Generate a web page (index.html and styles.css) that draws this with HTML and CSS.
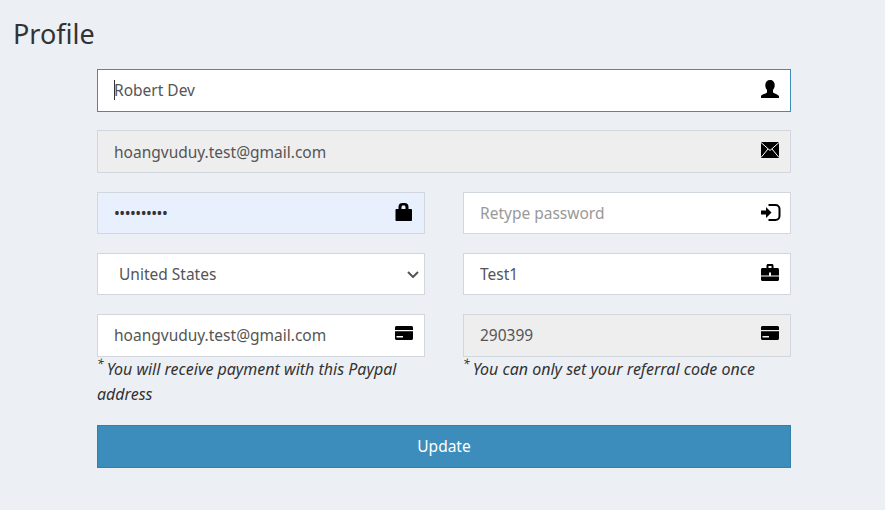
FILE: index.html
```html
<!DOCTYPE html>
<html lang="en">
<head>
  <meta charset="UTF-8" />
  <title>Profile</title>
  <link rel="stylesheet" href="styles.css">
</head>
<body>
  <h1>Profile</h1>

  <form class="form">
    <div class="field">
      <input type="text" value="Robert Dev" class="focus">
      <span class="caret"></span>
      <svg class="icon" viewBox="0 0 18 18"><path d="M9 0C6.200 0 4.300 2 4.300 5.200c0 2 .8 3.600 1.700 4.600V12.500C4.800 13.800 1 14.200 0 16v2h18v-2c-1-1.800-4.800-2.200-6-3.500V9.800c.9-1 1.700-2.600 1.700-4.600C13.700 2 11.800 0 9 0z"/></svg>
    </div>

    <div class="field">
      <input type="text" value="hoangvuduy.test@gmail.com" class="off" readonly>
      <svg class="icon" viewBox="0 0 18 18"><rect y="1" width="18" height="16"/><path class="cut" d="M0 1.500 9 9.500l9-8M0 16.500l7-8.500M18 16.500l-7-8.500"/></svg>
    </div>

    <div class="row">
      <div class="field">
        <input type="password" value="1234567890" class="autofill dots">
        <svg class="icon" viewBox="0 0 18 18"><path fill-rule="evenodd" d="M3.500 6V4a4 4 0 0 1 4-4h2a4 4 0 0 1 4 4v2h2.500c.6 0 1 .4 1 1v10c0 .6-.4 1-1 1H1.500c-.6 0-1-.4-1-1V7c0-.6.4-1 1-1zm3 0h4V4c0-.8-.7-1.500-1.500-1.500H8c-.8 0-1.500.7-1.500 1.500z"/></svg>
      </div>
      <div class="field">
        <input type="password" placeholder="Retype password">
        <svg class="icon wide" viewBox="0 0 20 18"><path d="M0 7.500h5V4l5.500 5.500L5 15v-3.500H0zM7.500 1h7a5 5 0 0 1 5 5v7a5 5 0 0 1-5 5h-7v-2h7a3 3 0 0 0 3-3V6a3 3 0 0 0-3-3h-7z"/></svg>
      </div>
    </div>

    <div class="row">
      <div class="field">
        <select>
          <option>United States</option>
        </select>
        <svg class="chevron" viewBox="0 0 12 7"><path d="M1 1l5 5 5-5"/></svg>
      </div>
      <div class="field">
        <input type="text" value="Test1">
        <svg class="icon" viewBox="0 0 18 18"><path fill-rule="evenodd" d="M5.500 4V1.500C5.500.7 6.200 0 7 0h4c.8 0 1.500.7 1.500 1.500V4h4c.8 0 1.500.7 1.500 1.500v6H0v-6C0 4.700.7 4 1.500 4zm2 0h3V2h-3zM8 8.500v3h2v-3zM0 12.500h18v3c0 .8-.7 1.500-1.500 1.500h-15C.7 17 0 16.300 0 15.500z"/></svg>
      </div>
    </div>

    <div class="row">
      <div class="field-wrap">
        <div class="field">
          <input type="text" value="hoangvuduy.test@gmail.com">
          <svg class="icon" viewBox="0 0 18 18"><path fill-rule="evenodd" d="M1.500 1h15c.8 0 1.500.7 1.500 1.500V5H0V2.500C0 1.700.7 1 1.500 1zM0 6.200h18v7.300c0 .8-.7 1.500-1.500 1.500h-15C.7 15 0 14.300 0 13.500zM1.500 11v1.500H8V11z"/></svg>
        </div>
        <p class="note"><sup>*</sup>You will receive payment with this Paypal address</p>
      </div>
      <div class="field-wrap">
        <div class="field">
          <input type="text" value="290399" class="off" readonly>
          <svg class="icon" viewBox="0 0 18 18"><path fill-rule="evenodd" d="M1.500 1h15c.8 0 1.500.7 1.500 1.500V5H0V2.500C0 1.700.7 1 1.500 1zM0 6.200h18v7.300c0 .8-.7 1.500-1.500 1.500h-15C.7 15 0 14.300 0 13.500zM1.500 11v1.500H8V11z"/></svg>
        </div>
        <p class="note"><sup>*</sup>You can only set your referral code once</p>
      </div>
    </div>

    <button type="button">Update</button>
  </form>
</body>
</html>
```
FILE: styles.css
```css
* {
  box-sizing: border-box;
}

body {
  font-family: "Noto Sans", "Open Sans", sans-serif;
  margin: 0;
  padding: 0 94px 0 13px;
  height: 510px;
  overflow: hidden;
  color: #333;
  background: #ecf0f5;
}

h1 {
  font-size: 27px;
  font-weight: 400;
  line-height: 38px;
  margin: 0;
  padding-top: 15px;
  height: 69px;
}

.form {
  margin-left: 84px;
  width: 694px;
}

.row {
  display: grid;
  grid-template-columns: 328px 328px;
  column-gap: 38px;
}

.field {
  position: relative;
  height: 42.5px;
  margin-bottom: 18.75px;
}

.field-wrap .field {
  margin-bottom: 0;
}

input, select {
  width: 100%;
  height: 100%;
  font-family: inherit;
  font-size: 15.5px;
  color: #555;
  padding: 0 40px 0 16px;
  border: 1px solid #d2d6de;
  background: #fff;
  outline: none;
  border-radius: 0;
}

select {
  appearance: none;
  padding-left: 21px;
}

input::placeholder {
  color: #999;
}

.focus {
  border-color: #3c8dbc;
}

.off {
  background: #eee;
}

.autofill {
  background: #e8f0fe;
}

.dots {
  letter-spacing: -0.5px;
  color: #333;
}

.caret {
  position: absolute;
  left: 17px;
  top: 11px;
  width: 1px;
  height: 20px;
  background: #333;
}

.icon {
  position: absolute;
  right: 12px;
  top: 11px;
  width: 18px;
  height: 18px;
  fill: #000;
}

.icon.wide {
  right: 10px;
  width: 20px;
}

.cut {
  fill: none;
  stroke: #fff;
  stroke-width: 1;
}

.chevron {
  position: absolute;
  right: 6px;
  top: 18px;
  width: 12px;
  height: 7px;
  fill: none;
  stroke: #555;
  stroke-width: 2;
  pointer-events: none;
}

.note {
  margin: 0;
  height: 68px;
  font-size: 16px;
  line-height: 25px;
  font-style: italic;
  color: #333;
}

.note sup {
  font-size: 12px;
  line-height: 0;
  margin-right: 3px;
}

button {
  display: block;
  width: 100%;
  height: 43px;
  font-family: inherit;
  font-size: 15.5px;
  color: #fff;
  background: #3c8dbc;
  border: 1px solid #367fa9;
  border-radius: 0;
}
```
